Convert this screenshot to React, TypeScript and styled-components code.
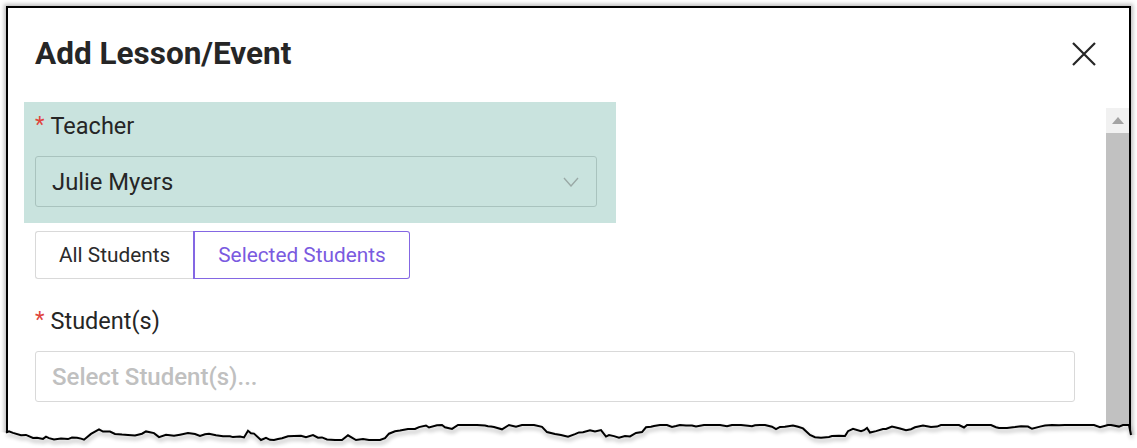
import React from "react";
import styled, { createGlobalStyle } from "styled-components";

const Global = createGlobalStyle`
  html, body { margin: 0; padding: 0; background: #ffffff; }
  body { width: 1137px; height: 448px; overflow: hidden; font-family: Roboto, "Noto Sans", sans-serif; }
  #root { width: 1137px; height: 448px; }
`;

const Page = styled.div`
  position: relative;
  width: 1137px;
  height: 448px;
  padding: 6px 0 0 6px;
  box-sizing: border-box;
  overflow: hidden;
`;

const Frame = styled.div`
  width: 1125px;
  height: 460px;
  box-sizing: border-box;
  border: 2px solid #000;
  border-bottom: none;
  background: #fff;
  box-shadow: 0 0 4px 2px rgba(0, 0, 0, 0.25);
  display: flex;
  flex-direction: column;
`;

const Header = styled.div`
  height: 94px;
  display: flex;
  align-items: center;
  justify-content: space-between;
  padding: 0 32px 3px 27px;
  box-sizing: border-box;
  flex-shrink: 0;
`;

const Title = styled.h1`
  margin: 0;
  font-family: Roboto, sans-serif;
  font-weight: 700;
  font-size: 31.5px;
  color: #262626;
  line-height: 36px;
`;

const CloseButton = styled.button`
  border: none;
  background: transparent;
  padding: 0;
  width: 26px;
  height: 26px;
  display: flex;
  align-items: center;
  justify-content: center;
  cursor: pointer;
`;

const Body = styled.div`
  flex: 1;
  display: flex;
  min-height: 0;
`;

const Content = styled.div`
  flex: 1;
  padding: 0 30px 0 16px;
`;

const Highlight = styled.div`
  width: 592px;
  background: #c9e3de;
  padding: 10px 19px 16px 11px;
  box-sizing: border-box;
`;

const Label = styled.div`
  font-family: Roboto, sans-serif;
  font-size: 23.5px;
  color: #262626;
  line-height: 28px;
  display: flex;
  align-items: center;
`;

const Required = styled.span`
  color: #e0453d;
  font-size: 22px;
  margin-right: 6px;
  position: relative;
  top: -1px;
`;

const SelectBox = styled.div`
  margin-top: 16px;
  height: 51px;
  box-sizing: border-box;
  border: 1px solid #a9c3be;
  border-radius: 3px;
  display: flex;
  align-items: center;
  justify-content: space-between;
  padding: 0 17px 0 16px;
  font-family: Roboto, sans-serif;
  font-size: 23.8px;
  color: #262626;
`;

const Segmented = styled.div`
  display: flex;
  margin: 8px 0 0 11px;
`;

const SegButton = styled.button<{ $active?: boolean }>`
  height: 48px;
  box-sizing: border-box;
  padding: 0 23px;
  font-family: Roboto, sans-serif;
  font-size: 20.8px;
  background: #fff;
  color: ${(p) => (p.$active ? "#7a5ae0" : "#2b2b2b")};
  border: 1px solid ${(p) => (p.$active ? "#8467e3" : "#d9d9d9")};
  border-radius: ${(p) => (p.$active ? "0 3px 3px 0" : "3px 0 0 3px")};
  ${(p) => (p.$active ? "border-left-width: 2px;" : "border-right: none;")}
  cursor: pointer;
`;

const StudentsLabel = styled(Label)`
  margin-top: 28px;
  padding-left: 11px;
`;

const Input = styled.div`
  margin: 16px 1px 0 11px;
  height: 51px;
  box-sizing: border-box;
  border: 1px solid #d9d9d9;
  border-radius: 3px;
  display: flex;
  align-items: center;
  padding: 0 16px;
  font-family: Roboto, sans-serif;
  font-weight: 500;
  font-size: 24px;
  color: #c0c0c0;
`;

const Scrollbar = styled.div`
  width: 23px;
  margin-top: 6px;
  display: flex;
  flex-direction: column;
  background: #f1f1f1;
`;

const ScrollArrow = styled.div`
  height: 25px;
  display: flex;
  align-items: center;
  justify-content: center;
  background: #f1f1f1;
`;

const ScrollThumb = styled.div`
  flex: 1;
  background: #c1c1c1;
`;

const TornEdge = styled.svg`
  position: absolute;
  left: 0;
  bottom: 0;
  width: 1137px;
  height: 40px;
  overflow: visible;
`;

function jaggedPath(): string {
  let seed = 11;
  const rnd = () => {
    seed = (seed * 9301 + 49297) % 233280;
    return seed / 233280;
  };
  const pts: [number, number][] = [];
  let y = 24;
  for (let x = 6; x <= 1129; x += 3 + Math.floor(rnd() * 6)) {
    y += (rnd() - 0.5) * 5;
    if (rnd() < 0.07) y -= 5;
    if (rnd() < 0.07) y += 5;
    y = Math.max(17, Math.min(32, y));
    pts.push([x, y]);
  }
  pts.push([1131, 27]);
  return pts.map((p, i) => `${i === 0 ? "M" : "L"}${p[0]} ${p[1].toFixed(1)}`).join(" ");
}

const edge = jaggedPath();

export default function App() {
  return (
    <>
      <Global />
      <Page>
        <Frame>
          <Header>
            <Title>Add Lesson/Event</Title>
            <CloseButton aria-label="Close">
              <svg width="26" height="26" viewBox="0 0 26 26">
                <path d="M2 2 L24 24 M24 2 L2 24" stroke="#262626" strokeWidth="2.2" fill="none" />
              </svg>
            </CloseButton>
          </Header>
          <Body>
            <Content>
              <Highlight>
                <Label>
                  <Required>*</Required>Teacher
                </Label>
                <SelectBox>
                  <span>Julie Myers</span>
                  <svg width="16" height="10" viewBox="0 0 16 10">
                    <path d="M1 1 L8 9 L15 1" stroke="#9aa9a6" strokeWidth="1.4" fill="none" />
                  </svg>
                </SelectBox>
              </Highlight>
              <Segmented>
                <SegButton>All Students</SegButton>
                <SegButton $active>Selected Students</SegButton>
              </Segmented>
              <StudentsLabel>
                <Required>*</Required>Student(s)
              </StudentsLabel>
              <Input>Select Student(s)...</Input>
            </Content>
            <Scrollbar>
              <ScrollArrow>
                <svg width="12" height="7" viewBox="0 0 12 7">
                  <path d="M0 7 L6 0 L12 7 Z" fill="#a3a3a3" />
                </svg>
              </ScrollArrow>
              <ScrollThumb />
            </Scrollbar>
          </Body>
        </Frame>
        <TornEdge viewBox="0 0 1137 40">
          <defs>
            <filter id="sh" x="-5%" y="-50%" width="110%" height="200%">
              <feGaussianBlur in="SourceAlpha" stdDeviation="2" />
              <feOffset dx="1" dy="3" />
              <feComponentTransfer>
                <feFuncA type="linear" slope="0.35" />
              </feComponentTransfer>
              <feMerge>
                <feMergeNode />
                <feMergeNode in="SourceGraphic" />
              </feMerge>
            </filter>
          </defs>
          <path d={`${edge} L1137 27 L1137 40 L0 40 L0 24 Z`} fill="#ffffff" />
          <path d={edge} stroke="#000" strokeWidth="2" fill="none" filter="url(#sh)" />
        </TornEdge>
      </Page>
    </>
  );
}
